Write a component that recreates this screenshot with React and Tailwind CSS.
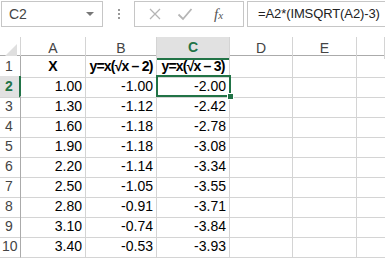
import React from "react";

const cols = ["A", "B", "C", "D", "E", ""];
const widths = "grid-cols-[21px_65px_71px_73px_63px_64px_1fr]";

const data = [
  ["1.00", "-1.00", "-2.00"],
  ["1.30", "-1.12", "-2.42"],
  ["1.60", "-1.18", "-2.78"],
  ["1.90", "-1.18", "-3.08"],
  ["2.20", "-1.14", "-3.34"],
  ["2.50", "-1.05", "-3.55"],
  ["2.80", "-0.91", "-3.71"],
  ["3.10", "-0.74", "-3.84"],
  ["3.40", "-0.53", "-3.93"],
];

const cellFont = { fontFamily: "'Liberation Sans', Arial, sans-serif" };

const Toolbar = () => (
  <div className="flex h-[37px] items-start pt-px pl-px text-[#444]">
    <div className="flex h-[26px] w-[102px] items-center justify-between border border-[#c6c6c6] pl-[7px] pr-[8px] text-[14px]">
      <span>C2</span>
      <span className="h-0 w-0 border-x-[4px] border-t-[4px] border-x-transparent border-t-[#777]" />
    </div>
    <div className="flex h-[26px] w-[31px] flex-col items-center justify-center gap-[2px]">
      <span className="h-[2px] w-[2px] bg-[#999]" />
      <span className="h-[2px] w-[2px] bg-[#999]" />
      <span className="h-[2px] w-[2px] bg-[#999]" />
    </div>
    <div className="flex h-[26px] w-[110px] items-center border border-[#c6c6c6]">
      <svg width="14" height="14" viewBox="0 0 14 14" className="ml-[13px]">
        <path d="M2 2 L12 12 M12 2 L2 12" stroke="#b5b5b5" strokeWidth="1.3" />
      </svg>
      <svg width="16" height="14" viewBox="0 0 16 14" className="ml-[15px]">
        <path d="M1.5 7.5 L6 12 L14.5 2" stroke="#b5b5b5" strokeWidth="1.8" fill="none" />
      </svg>
      <span className="ml-[21px] text-[15px] italic text-[#555]" style={{ fontFamily: "'Liberation Serif', serif" }}>
        f<span className="text-[11px]">x</span>
      </span>
    </div>
    <div className="ml-[3px] flex h-[26px] flex-1 items-center overflow-hidden whitespace-nowrap border border-r-0 border-[#c6c6c6] pl-[10px] text-[13px] tracking-[-0.1px] text-[#222]">
      =A2*(IMSQRT(A2)-3)
    </div>
  </div>
);

export default function App() {
  return (
    <div className="h-[258px] w-[385px] overflow-hidden bg-white" style={cellFont}>
      <Toolbar />
      <div className="relative">
        {/* column headers */}
        <div className={`grid ${widths} h-[19px] border-b border-[#ababab]`}>
          <div className="flex items-end justify-end border-r border-[#d4d4d4] pb-[3px] pr-[3px]">
            <svg width="12" height="12" viewBox="0 0 12 12">
              <path d="M12 0 L12 12 L0 12 Z" fill="#dfdfdf" />
            </svg>
          </div>
          {cols.map((c, i) =>
            c === "C" ? (
              <div key={i} className="-mb-px flex items-center justify-center border-b-2 border-r border-b-[#217346] border-r-[#d4d4d4] bg-[#e1e1e1] text-[14px] font-bold text-[#217346]">
                {c}
              </div>
            ) : (
              <div key={i} className="flex items-center justify-center border-r border-[#d4d4d4] text-[14px] text-[#444]">
                {c}
              </div>
            )
          )}
        </div>
        {/* row 1 */}
        <div className={`grid ${widths} h-[20px]`}>
          <div className="flex items-center border-b border-r border-[#d4d4d4] border-r-[#ababab] pl-[5px] text-[14px] text-[#444]">1</div>
          <div className="flex items-center justify-center border-b border-r border-[#d4d4d4] text-[14px] font-bold text-black">X</div>
          <div className="flex items-center justify-center overflow-hidden whitespace-nowrap border-b border-r border-[#d4d4d4] text-[14px] font-bold tracking-[-0.8px] text-black">y=x(√x – 2)</div>
          <div className="flex items-center justify-center overflow-hidden whitespace-nowrap border-b border-r border-[#d4d4d4] text-[14px] font-bold tracking-[-0.8px] text-black">y=x(√x – 3)</div>
          <div className="border-b border-r border-[#d4d4d4]" />
          <div className="border-b border-r border-[#d4d4d4]" />
          <div className="border-b border-[#d4d4d4]" />
        </div>
        {data.map((r, i) => (
          <div key={i} className={`grid ${widths} h-[20px]`}>
            <div
              className={`flex items-center border-b border-r border-[#d4d4d4] text-[14px] ${
                i === 0 ? "border-r-2 border-r-[#217346] bg-[#e1e1e1] font-bold text-[#217346]" : "border-r-[#ababab] text-[#444]"
              } ${i === 8 ? "pl-[2px]" : "pl-[5px]"}`}
            >
              {i + 2}
            </div>
            {r.map((v, j) => (
              <div key={j} className="flex items-center justify-end border-b border-r border-[#d4d4d4] pr-[3px] text-[14px] text-black">
                {v}
              </div>
            ))}
            <div className="border-b border-r border-[#d4d4d4]" />
            <div className="border-b border-r border-[#d4d4d4]" />
            <div className="border-b border-[#d4d4d4]" />
          </div>
        ))}
        {/* selection C2 */}
        <div className="pointer-events-none absolute left-[156px] top-[38px] h-[22px] w-[75px] border-2 border-[#217346]" />
        <div className="pointer-events-none absolute left-[227px] top-[56px] h-[7px] w-[7px] border border-white bg-[#217346]" />
      </div>
    </div>
  );
}
